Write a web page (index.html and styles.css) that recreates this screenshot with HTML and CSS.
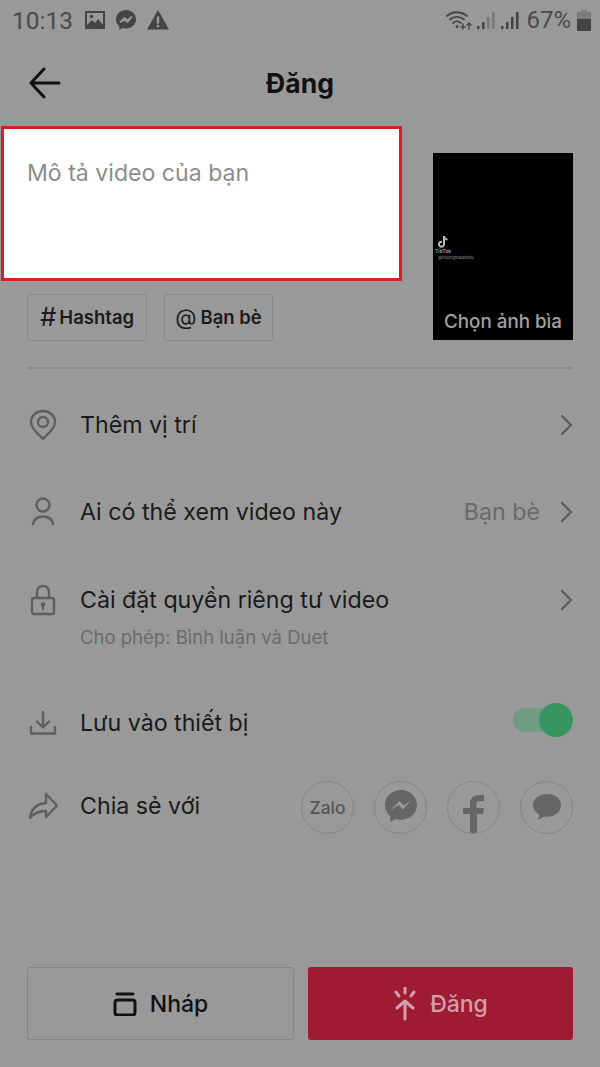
FILE: index.html
```html
<!DOCTYPE html>
<html lang="vi">
<head>
<meta charset="UTF-8">
<meta name="viewport" content="width=device-width, initial-scale=1.0">
<title>Đăng</title>
<link rel="stylesheet" href="styles.css">
</head>
<body>

<div class="status">
    <span class="time">10:13</span>
    <svg class="st-icon" width="20" height="20" viewBox="0 0 20 20"><path fill="#444" fill-rule="evenodd" d="M0 1h20v18H0zM2 3v12l5-5 3 3 3-4 5 6V3z"/><circle cx="6.500" cy="6.500" r="1.800" fill="#444"/></svg>
    <svg class="st-icon" width="22" height="22" viewBox="0 0 22 22"><path fill="#444" d="M11 1C5.400 1 1 5 1 10.300c0 2.800 1.200 5.200 3.200 6.900V21l3.400-1.900c1 .3 2.200.4 3.400.4 5.600 0 10-4 10-9.200S16.600 1 11 1z"/><path fill="none" stroke="#999" stroke-width="1.800" stroke-linejoin="round" d="M5.500 13l4-4 3 2.500 4-3.500-4 5-3-2.500z"/></svg>
    <svg class="st-icon" width="22" height="20" viewBox="0 0 22 20"><path fill="#444" d="M11 0l11 19.500H0z"/><rect x="9.800" y="6.500" width="2.400" height="7" fill="#999"/><rect x="9.800" y="14.800" width="2.400" height="2.400" fill="#999"/></svg>
    <span class="status-right">
        <svg width="26" height="20" viewBox="0 0 26 20" fill="none" stroke="#444" stroke-width="1.800" stroke-linecap="round"><path d="M1 6c5.500-5 14-5 20 0"/><path d="M4 9.500c4-3.500 10-3.500 14 0"/><path d="M7 13c2.500-2 5.500-2 8 0"/><circle cx="11" cy="16.500" r=".6"/><path d="M17 14v5M15 17h4M23 19v-6M21 15l2-2 2 2" stroke-width="1.400"/></svg>
        <svg class="bars" width="20" height="20" viewBox="0 0 20 20"><path fill="#444" d="M1 16h2.500v3H1zM6 12h2.500v7H6z"/><path fill="#7a7a7a" d="M11 7h2.500v12H11zM16 2h2.500v17H16z"/></svg>
        <svg class="bars" width="20" height="20" viewBox="0 0 20 20"><path fill="#444" d="M1 16h2.500v3H1zM6 12h2.500v7H6zM11 7h2.500v12H11zM16 2h2.500v17H16z"/></svg>
        <span class="pct">67%</span>
        <svg class="batt" width="14" height="21" viewBox="0 0 14 21"><path fill="#7d7d7d" d="M4 0h6v2h4v7H0V2h4z"/><rect y="9" width="14" height="12" fill="#444"/></svg>
    </span>
</div>

<div class="header">
    <svg class="back" width="34" height="32" viewBox="0 0 34 32" fill="none" stroke="#111" stroke-width="3" stroke-linecap="round" stroke-linejoin="round"><path d="M3 16h28M16 2L3 16l13 14"/></svg>
    <h1 class="title">Đăng</h1>
</div>

<div class="compose">
    <div class="compose-left">
        <div class="desc">Mô tả video của bạn</div>
        <div class="tags">
            <div class="tag tag-hash"><span class="tag-sign">#</span>Hashtag</div>
            <div class="tag tag-friend"><span class="tag-sign tag-at">@</span>Bạn bè</div>
        </div>
    </div>
    <div class="thumb">
        <div class="tt-mark">
            <svg width="10" height="12" viewBox="0 0 10 12"><path fill="#bbb" d="M5 0h2c.1 1.400 1 2.300 2.500 2.500v2C8.400 4.400 7.700 4.100 7 3.600V8c0 2.200-1.600 3.700-3.500 3.700S0 10.200 0 8.200s1.800-3.600 3.900-3.300v2.100C2.900 6.800 2 7.300 2 8.200c0 .9.700 1.500 1.500 1.500S5 9 5 8z"/></svg>
            <span class="tt-name">TikTok</span>
            <span class="tt-user">@thuongmaidientu</span>
        </div>
        <div class="thumb-label">Chọn ảnh bìa</div>
    </div>
</div>

<div class="divider"></div>

<div class="row row-place">
    <svg class="row-icon" width="32" height="32" viewBox="0 0 32 32" fill="none" stroke="#5f5f5f" stroke-width="2.400" stroke-linejoin="round"><path d="M16 30c-4-4.500-12-10-12-17C4 6.500 9.500 2 16 2s12 4.500 12 11c0 7-8 12.500-12 17z"/><circle cx="16" cy="13" r="5"/></svg>
    <span class="row-text">Thêm vị trí</span>
    <svg class="chev" width="14" height="22" viewBox="0 0 14 22" fill="none" stroke="#5a5a5a" stroke-width="2.200" stroke-linecap="round" stroke-linejoin="round"><path d="M3 2l9 9-9 9"/></svg>
</div>

<div class="row row-who">
    <svg class="row-icon" width="32" height="32" viewBox="0 0 32 32" fill="none" stroke="#5f5f5f" stroke-width="2.400" stroke-linecap="round"><circle cx="16" cy="9" r="6.500"/><path d="M6 28c1-5.500 5.500-7.500 10-7.500S25 22.500 26 28"/></svg>
    <span class="row-text">Ai có thể xem video này</span>
    <span class="row-value">Bạn bè</span>
    <svg class="chev" width="14" height="22" viewBox="0 0 14 22" fill="none" stroke="#5a5a5a" stroke-width="2.200" stroke-linecap="round" stroke-linejoin="round"><path d="M3 2l9 9-9 9"/></svg>
</div>

<div class="row row-privacy">
    <svg class="row-icon" width="32" height="32" viewBox="0 0 32 32" fill="none" stroke="#5f5f5f" stroke-width="2.400" stroke-linejoin="round"><rect x="5" y="14" width="22" height="16" rx="2"/><path d="M10 14V8c0-3.500 2.500-6 6-6s6 2.500 6 6v6"/><circle cx="16" cy="20.500" r="2.200" fill="#5f5f5f" stroke="none"/><rect x="15" y="21" width="2" height="5" fill="#5f5f5f" stroke="none"/></svg>
    <span class="row-text">Cài đặt quyền riêng tư video</span>
    <svg class="chev" width="14" height="22" viewBox="0 0 14 22" fill="none" stroke="#5a5a5a" stroke-width="2.200" stroke-linecap="round" stroke-linejoin="round"><path d="M3 2l9 9-9 9"/></svg>
</div>
<div class="row-sub">Cho phép: Bình luận và Duet</div>

<div class="row row-save">
    <svg class="row-icon" width="32" height="32" viewBox="0 0 32 32" fill="none" stroke="#5f5f5f" stroke-width="2.400" stroke-linecap="round" stroke-linejoin="round"><path d="M16 5v15M10 14.500l6 6 6-6M4 20v6.500h24V20"/></svg>
    <span class="row-text">Lưu vào thiết bị</span>
    <div class="toggle"><div class="knob"></div></div>
</div>

<div class="row row-share">
    <svg class="row-icon" width="32" height="32" viewBox="0 0 32 32" fill="none" stroke="#5f5f5f" stroke-width="2.400" stroke-linejoin="round"><path d="M19 4l11 11.500L19 27v-6c-6 0-11 1-16 7 1-8 6-14 16-15z"/></svg>
    <span class="row-text">Chia sẻ với</span>
    <div class="shares">
        <div class="share"><span class="zalo">Zalo</span></div>
        <div class="share">
            <svg width="34" height="36" viewBox="0 0 34 36"><path fill="#666" d="M17 1C8 1 1 7.500 1 16c0 4.600 2 8.500 5.200 11.200V33l5.500-3c1.700.5 3.400.7 5.300.7 9 0 16-6.400 16-14.700S26 1 17 1z"/><path fill="#9a9a9a" d="M7 21l8.500-9 4.500 4.500L27.500 11 19 20.500 14.500 16z"/></svg>
        </div>
        <div class="share share-fb">
            <svg width="22" height="38" viewBox="0 0 22 38"><path fill="#666" d="M7 38V19H0v-6h7V9c0-6 3.500-9 9-9h5v6h-4c-2.500 0-3.500 1-3.500 3.500V13H21l-1 6h-6v19z"/></svg>
        </div>
        <div class="share">
            <svg width="30" height="28" viewBox="0 0 30 28"><path fill="#666" d="M15 1C7 1 1 5.700 1 12c0 4 2.500 7.400 6.300 9.300L6 27l6.200-3.500c.9.200 1.900.3 2.800.3 8 0 14-5.200 14-11.800S23 1 15 1z"/></svg>
        </div>
    </div>
</div>

<div class="footer">
    <div class="btn btn-draft">
        <svg width="24" height="24" viewBox="0 0 24 24" fill="none" stroke="#111" stroke-width="3" stroke-linejoin="round"><path d="M4 2h16" stroke-linecap="round"/><rect x="2" y="8" width="20" height="15" rx="2.500"/></svg>
        Nháp
    </div>
    <div class="btn btn-post">
        <svg width="24" height="34" viewBox="0 0 24 34" fill="none" stroke="#d0a0aa" stroke-width="3" stroke-linecap="round" stroke-linejoin="round"><path d="M12 14v18M4 21l8-7 8 7M12 1v5M3 5l3 4M21 5l-3 4"/></svg>
        Đăng
    </div>
</div>

</body>
</html>
```

FILE: styles.css
```css
* {
    box-sizing: border-box;
}
html, body {
    height: 100%;
}
body {
    font-family: "Inter", "Noto Sans", sans-serif;
    background-color: #999999;
    color: #161616;
    margin: 0;
    padding: 0;
    display: flex;
    flex-direction: column;
    overflow: hidden;
}
.status {
    display: flex;
    align-items: center;
    height: 38px;
    padding: 2px 27px 0 12px;
    font-family: "Roboto", sans-serif;
    color: #4a4a4a;
}
.time {
    font-size: 24.500px;
    margin-right: 12px;
}
.st-icon {
    margin-right: 10px;
}
.status-right {
    margin-left: auto;
    display: flex;
    align-items: center;
    gap: 4px;
    margin-right: -18px;
}
.pct {
    font-size: 24px;
    margin-left: 2px;
    margin-right: 2px;
}
.header {
    height: 88px;
    display: flex;
    align-items: center;
    justify-content: center;
    position: relative;
}
.back {
    position: absolute;
    left: 28px;
    top: 29px;
}
.title {
    margin: 0;
    font-size: 26.500px;
    font-weight: 700;
    color: #111;
    padding-top: 2px;
}
.compose {
    display: flex;
}
.compose-left {
    width: 402px;
}
.desc {
    height: 155px;
    margin-left: 1px;
    background-color: #ffffff;
    border: 3px solid #d81e26;
    padding: 29px 23px;
    font-size: 23.100px;
    line-height: 30px;
    color: #8c8c8c;
}
.tags {
    display: flex;
    gap: 17px;
    margin: 13px 0 0 27px;
}
.tag {
    height: 47px;
    padding-bottom: 2px;
    display: flex;
    align-items: center;
    justify-content: center;
    border: 1.500px solid #8a8a8a;
    border-radius: 3px;
    font-size: 18.500px;
    font-weight: 600;
    color: #1c1c1c;
}
.tag-hash {
    width: 120px;
}
.tag-friend {
    width: 109px;
}
.tag-sign {
    font-size: 26px;
    font-weight: 400;
    margin-right: 3px;
}
.tag-at {
    font-size: 22px;
    margin-right: 4px;
}
.thumb {
    width: 140px;
    height: 187px;
    margin: 27px 0 0 31px;
    background-color: #000000;
    position: relative;
    display: flex;
    flex-direction: column;
    justify-content: flex-end;
    align-items: center;
    padding-bottom: 6px;
}
.thumb-label {
    color: #a0a0a0;
    font-size: 18.800px;
    font-weight: 500;
    line-height: 24px;
}
.tt-mark {
    position: absolute;
    left: 2px;
    top: 83px;
    display: flex;
    flex-direction: column;
    align-items: flex-start;
    color: #999;
}
.tt-mark svg {
    margin-left: 3px;
}
.tt-name {
    font-size: 5px;
    font-weight: 700;
    line-height: 7px;
}
.tt-user {
    font-size: 4px;
    line-height: 6px;
    margin-left: 3px;
}
.divider {
    height: 2px;
    margin: 26px 27px 0;
    background-color: #8a8a8a;
}
.row {
    display: flex;
    align-items: center;
    height: 86px;
    padding: 0 27px;
}
.row-place {
    height: 114px;
    margin-top: -1px;
}
.row-who {
    height: 60px;
}
.row-privacy {
    height: 116px;
}
.row-save {
    height: 72px;
    margin-top: 39px;
}
.row-share {
    height: 94px;
}
.row-icon {
    width: 32px;
    height: 32px;
    margin-right: 21px;
    flex: none;
}
.row-text {
    font-size: 23.200px;
    color: #1a1a1a;
}
.row-value {
    margin-left: auto;
    font-size: 23.200px;
    color: #6a6a6a;
    margin-right: 19px;
}
.chev {
    margin-left: auto;
}
.row-value + .chev {
    margin-left: 0;
}
.row-sub {
    font-size: 18.500px;
    line-height: 22px;
    color: #6b6b6b;
    margin: -32px 0 0 80px;
}
.toggle {
    margin-left: auto;
    margin-top: -6px;
    width: 60px;
    height: 24px;
    border-radius: 12px;
    background-color: #6e9b81;
    position: relative;
}
.knob {
    position: absolute;
    right: 0;
    top: -5px;
    width: 34px;
    height: 34px;
    border-radius: 50%;
    background-color: #36955f;
}
.shares {
    margin-left: auto;
    margin-top: 2px;
    display: flex;
    gap: 20px;
}
.share {
    width: 53px;
    height: 53px;
    border: 1.500px solid #868686;
    border-radius: 50%;
    display: flex;
    align-items: center;
    justify-content: center;
    overflow: hidden;
}
.share-fb {
    align-items: flex-end;
}
.zalo {
    font-size: 17.500px;
    font-weight: 500;
    color: #555;
}
.footer {
    margin-top: auto;
    display: flex;
    gap: 14px;
    padding: 0 27px 27px;
}
.btn {
    flex: 1;
    height: 73px;
    border-radius: 3px;
    display: flex;
    align-items: center;
    justify-content: center;
    gap: 13px;
    font-size: 23px;
    font-weight: 500;
}
.btn-draft {
    border: 1.500px solid #858585;
    color: #111;
}
.btn-post {
    background-color: #9f1a33;
    color: #d0a0aa;
}
```
